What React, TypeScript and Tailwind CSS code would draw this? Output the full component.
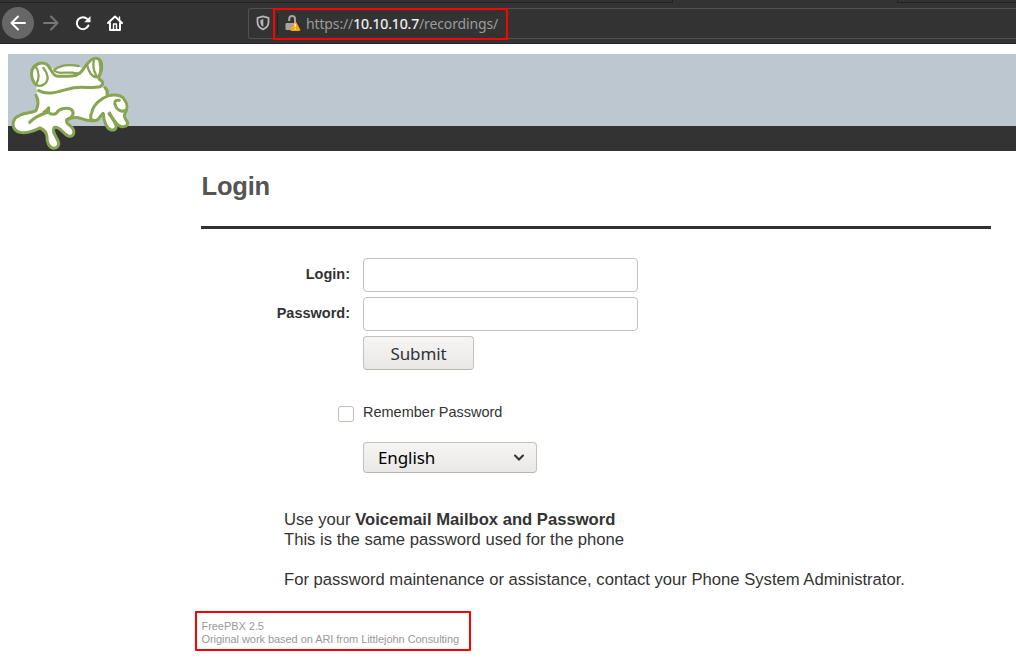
import React from "react";

function Frog() {
  return (
    <svg className="block h-[97px] w-[124px]" viewBox="0 0 372 291" fill="none" strokeLinecap="round" strokeLinejoin="round">
      <path
        fill="#fff"
        d="M105 27C88 26 72 42 72 66Q74 86 84 94Q86 110 88 112L84 124Q92 150 84 170Q58 174 40 180C14 192 12 215 20 226C38 244 72 236 96 222C112 226 118 240 117 255C118 275 130 286 144 282C158 276 154 263 143 246Q133 228 142 220C160 220 166 239 181 245C197 249 204 236 196 223L177 205L180 198L220 193L264 200L286 178C286 196 296 220 306 227C320 230 329 224 324 211L345 218C362 219 365 209 352 196L350 184C359 165 359 147 347 133Q323 118 300 124L298 105L279 99C290 90 284 80 272 76C281 58 284 34 276 17C256 4 240 21 222 43Q200 29 164 37L140 47L126 40Q120 28 105 27Z"
      />
      <g stroke="#88a552" strokeWidth="9">
        <path d="M85 93C74 86 67 63 73 46C82 28 103 22 116 31C127 37 131 62 145 66Q165 68 192 66C216 65 223 49 235 33C247 17 260 8 272 15C286 23 281 52 276 62Q271 70 274 76C288 83 286 93 276 98C255 103 225 98 197 101C160 108 126 128 92 110" />
        <path d="M83 38C95 54 94 75 84 92C99 101 116 91 119 73C119 58 112 50 106 42M139 48C155 34 182 31 212 36M139 50Q149 58 164 56H193L214 59" strokeWidth="7" />
        <path d="M237 32C242 54 252 69 267 70C276 68 281 46 274 20M258 16Q252 43 265 65" strokeWidth="7" />
        <path d="M84 124C91 137 92 154 84 170C70 178 39 175 22 192C8 211 17 230 36 235C58 241 79 229 96 222C110 228 116 235 117 249C116 265 124 282 137 283C154 281 156 267 145 251C139 240 132 230 139 220C159 218 164 239 181 246C195 250 202 237 194 223C183 211 171 207 177 196C196 190 200 177 190 166C174 159 151 165 146 177Q138 183 126 179" />
        <path d="M65 205C81 188 101 180 122 174V161Q118 168 108 174M177 197C194 190 207 188 218 193C236 200 249 203 265 199Q271 198 276 188L285 178M291 101Q301 111 297 121" />
        <path d="M264 199C245 203 245 186 252 174C256 152 280 132 302 125C318 121 341 122 349 137C360 151 358 168 350 180C346 191 355 197 359 206C359 218 343 221 334 215C322 209 316 191 303 180" />
        <path d="M334 139C319 137 318 146 323 156C326 168 342 174 350 170M286 180C287 205 298 226 310 228C324 229 329 219 320 205Q310 190 305 177" />
      </g>
    </svg>
  );
}

function Shield() {
  return (
    <svg className="h-[16px] w-[14px]" viewBox="0 0 14 16" fill="none">
      <path d="M7 1.3L12.5 2.8V7C12.5 10.5 10.5 13 7 14.3C3.5 13 1.5 10.5 1.5 7V2.8Z" stroke="#b5b5b5" strokeWidth="1.8" strokeLinejoin="round" />
      <path d="M7.3 4.1L4.4 4.9V7C4.4 9.2 5.4 10.9 7.3 11.9Z" fill="#b5b5b5" />
    </svg>
  );
}

function WarningLock() {
  return (
    <svg className="h-[17px] w-[16px]" viewBox="0 0 16 17" fill="none">
      <path d="M4.2 6V4A2.9 2.9 0 0 1 10 4V8" stroke="#a5a5a5" strokeWidth="2" />
      <path d="M1.5 8H10V15H1.5Q.5 15 .5 14V9Q.5 8 1.5 8Z" fill="#a5a5a5" />
      <path d="M10.3 6.5L14.8 14.5Q15.2 15.5 14.2 15.5H6.5Q5.4 15.5 6 14.5Z" fill="#ffa90a" stroke="#ffa90a" strokeLinejoin="round" />
      <path d="M10.3 8.8V12M10.3 13.2V14.4" stroke="white" strokeWidth="1.4" />
    </svg>
  );
}

function BrowserBar() {
  return (
    <header className="relative flex h-11 items-start border-b border-[#272727] bg-[#333]">
      <div className="absolute left-0 top-0 h-[3px] w-[673px] border-b border-r border-[#232323]" />
      <div className="absolute right-0 top-0 h-[3px] w-[119px] border-b border-l border-[#232323]" />
      <nav className="flex w-[248px] shrink-0 items-center pl-0.5 pt-[7px]">
        <button aria-label="Back" className="flex size-8 items-center justify-center rounded-full bg-[#676767]">
          <svg className="size-4" viewBox="0 0 16 16" fill="none" stroke="#fff" strokeWidth="2" strokeLinecap="round" strokeLinejoin="round"><path d="M15 8H1.5M8 1.5L1.5 8L8 14.5" /></svg>
        </button>
        <button aria-label="Forward" className="ml-[9px]">
          <svg className="size-4" viewBox="0 0 16 16" fill="none" stroke="#777" strokeWidth="2" strokeLinecap="round" strokeLinejoin="round"><path d="M1 8H14.5M8 1.5L14.5 8L8 14.5" /></svg>
        </button>
        <button aria-label="Reload" className="ml-4">
          <svg className="size-4" viewBox="0 0 16 16" fill="none"><path d="M13.4 10.5A6 6 0 1 1 12.4 4.2" stroke="#fff" strokeWidth="2" strokeLinecap="round" /><path d="M15.5 1V7.2H9.2Z" fill="#fff" /></svg>
        </button>
        <button aria-label="Home" className="ml-4">
          <svg className="size-4" viewBox="0 0 16 16" fill="none" stroke="#fff" strokeWidth="2" strokeLinecap="round" strokeLinejoin="round"><path d="M1 8L8 1.5L15 8M3 8V15H13V8" /><path d="M6.5 14V9H9.5V14M12.5 2V5" strokeWidth="1.4" /></svg>
        </button>
      </nav>
      <div className="mt-2 flex h-[30.5px] flex-1 rounded-l-[3px] border-y border-l border-[#515151] pl-[7px] pt-1.5">
        <Shield />
        <div className="ml-[7px] flex">
          <span className="-mt-0.5 h-[22px] w-px bg-[#202020]" />
          <span className="ml-[7px]"><WarningLock /></span>
          <span className="ml-[5px] whitespace-nowrap font-['Noto_Sans',sans-serif] text-[14px] leading-[17px] tracking-[-0.14px] text-[#9b9b9b]">
            https://<span className="text-[#f5f5f5] [-webkit-text-stroke:0.2px_#f5f5f5]">10.10.10.7</span>/recordings/
          </span>
        </div>
      </div>
      <div className="absolute left-[273px] top-2 h-8 w-[235px] border-2 border-[#f00]" />
    </header>
  );
}

const control = "rounded border border-[#c5c1bc]";
const field = "h-[34px] w-[275px] rounded border border-[#c5c1bc] bg-white px-2 outline-none";

export default function App() {
  return (
    <div className="h-[664px] w-[1016px] overflow-hidden bg-white font-['Liberation_Sans',Arial,sans-serif] text-[#333]">
      <BrowserBar />
      <div className="ml-2 mt-2.5 h-[97px] bg-[linear-gradient(#bdc7d0_0_72px,#333_72px)]"><Frog /></div>
      <main className="ml-[201px] w-[790px]">
        <h1 className="h-[75px] pl-[0.5px] pt-5 text-[25.5px] font-bold leading-[30px] tracking-[-0.2px] text-[#555]">Login</h1>
        <hr className="h-[3px] border-0 bg-[#323134]" />
        <form className="mt-[29px]" onSubmit={(e: React.FormEvent) => e.preventDefault()}>
          <div className="grid grid-cols-[149px_275px] gap-x-[13px] gap-y-[5px] text-right text-[14.5px] font-bold">
            <label htmlFor="login" className="pt-[5px] leading-[22px]">Login:</label>
            <input id="login" className={field} />
            <label htmlFor="password" className="pt-[5px] leading-[22px]">Password:</label>
            <input id="password" type="password" className={field} />
            <button className={`${control} col-start-2 h-[34px] w-[111px] border-b-[#b9b4ae] bg-linear-to-b from-[#f6f5f4] to-[#e9e8e6] pt-px font-['Noto_Sans',sans-serif] text-[17px] font-normal leading-[32px] tracking-[-0.1px] text-[#2e3436]`}>Submit</button>
          </div>
          <label className="ml-[137px] mt-[32px] flex h-5 items-start text-[14.5px] leading-5">
            <input type="checkbox" className="mr-[9px] mt-1 size-4 appearance-none rounded-[3px] border border-[#c2bcb5] bg-white" />
            <span>Remember Password</span>
          </label>
          <button type="button" className={`${control} ml-[162px] mt-5 flex h-[31px] w-[174px] items-center justify-between border-b-[#b9b4ae] bg-linear-to-b from-[#f6f5f4] to-[#e9e8e6] pl-3.5 pr-3 font-['Noto_Sans',sans-serif] text-[17px] leading-[29px] tracking-[-0.1px] text-black`}>
            English
            <svg className="size-[10px]" viewBox="0 0 10 10" fill="none" stroke="#2e3436" strokeWidth="2" strokeLinecap="round"><path d="M1 2.5L5 6.5L9 2.5" /></svg>
          </button>
        </form>
        <section className="ml-[83px] mt-[37px] whitespace-nowrap text-[16.64px] leading-5">
          <p>Use your <b>Voicemail Mailbox and Password</b></p>
          <p>This is the same password used for the phone</p>
          <p className="mt-5">For password maintenance or assistance, contact your Phone System Administrator.</p>
        </section>
        <footer className="-ml-1.5 mt-[21px] h-10 w-[276px] whitespace-nowrap rounded-[1px] border-2 border-[#f00] pl-[4.5px] pt-[7px] text-[11px] leading-[13px] tracking-[-0.055px] text-[#999]">
          <p>FreePBX 2.5</p>
          <p>Original work based on ARI from Littlejohn Consulting</p>
        </footer>
      </main>
    </div>
  );
}
